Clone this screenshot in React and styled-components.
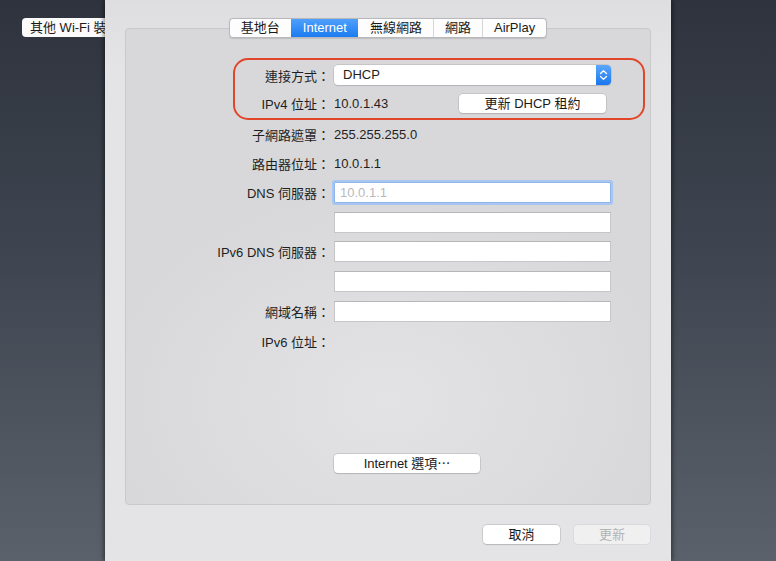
import React from "react";
import styled, { createGlobalStyle, css } from "styled-components";

const Global = createGlobalStyle`
  html, body { margin: 0; padding: 0; }
  body {
    font-family: "Liberation Sans", "Noto Sans CJK TC", sans-serif;
    font-size: 13px;
    color: #1e1e1e;
    -webkit-font-smoothing: antialiased;
  }
`;

const Desktop = styled.div`
  display: grid;
  grid-template-columns: 105px 566px 1fr;
  width: 776px;
  height: 561px;
  overflow: hidden;
  background: linear-gradient(180deg, #2e333d 0%, #3f4550 45%, #5b616a 100%);
`;

const BackColumn = styled.div`
  padding: 18px 0 0 22px;
  overflow: hidden;
`;

const BackButton = styled.div`
  height: 19px;
  width: 110px;
  box-sizing: border-box;
  padding-left: 8px;
  background: #fbfbfb;
  border-radius: 4px;
  white-space: nowrap;
  line-height: 19px;
  font-size: 13px;
  color: #1a1a1a;
`;

const Sheet = styled.div`
  display: flex;
  flex-direction: column;
  padding: 18px 20px 0;
  background: linear-gradient(180deg, #dedee0 0%, #e4e4e6 12%, #e4e4e6 100%);
  box-shadow: -2px 0 4px rgba(0, 0, 0, 0.35), 2px 0 4px rgba(0, 0, 0, 0.35);
  position: relative;
  z-index: 1;
`;

const TabBar = styled.div`
  align-self: center;
  display: flex;
  height: 20px;
  box-sizing: border-box;
  border: 1px solid #b9b9bb;
  border-radius: 4px;
  background: #fdfdfd;
  overflow: hidden;
  position: relative;
  z-index: 2;
  box-shadow: 0 0.5px 1px rgba(0, 0, 0, 0.12);
`;

const Tab = styled.div`
  padding: 0 11px;
  line-height: 18px;
  font-size: 13px;
  color: #1a1a1a;
  border-left: 1px solid #d6d6d6;
  &:first-child { border-left: none; }
  ${(p) =>
    p.$active &&
    css`
      color: #fff;
      border-left-color: transparent;
      background: linear-gradient(180deg, #4ea0fb 0%, #1c7bf2 100%);
      & + div { border-left-color: transparent; }
    `}
`;

const Panel = styled.div`
  position: relative;
  margin-top: -10px;
  height: 477px;
  box-sizing: border-box;
  border: 1px solid #c9c9cb;
  border-radius: 4px;
  background: radial-gradient(ellipse 55% 45% at 50% 78%, #e3e3e5 0%, #d8d8da 100%);
  padding-top: 36px;
  display: flex;
  flex-direction: column;
`;

const Annotation = styled.div`
  position: absolute;
  left: 107px;
  top: 29px;
  width: 412px;
  height: 62px;
  box-sizing: border-box;
  border: 2px solid #e2462a;
  border-radius: 15px;
  pointer-events: none;
`;

const Row = styled.div`
  display: grid;
  grid-template-columns: 204px 277px;
  column-gap: 4px;
  align-items: center;
  height: ${(p) => p.$h || 20}px;
  margin-top: ${(p) => p.$mt || 0}px;
`;

const Label = styled.div`
  text-align: right;
  white-space: nowrap;
  color: #1f1f1f;
`;

const Value = styled.div`
  display: flex;
  align-items: center;
  color: #1f1f1f;
`;

const Popup = styled.div`
  height: 20px;
  box-sizing: border-box;
  display: flex;
  align-items: stretch;
  background: #fff;
  border-radius: 4px;
  box-shadow: 0 0 0 0.5px #b4b4b6, 0 1px 1px rgba(0, 0, 0, 0.15);
  overflow: hidden;
`;

const PopupText = styled.div`
  flex: 1;
  padding-left: 9px;
  line-height: 20px;
`;

const Stepper = styled.div`
  width: 15px;
  display: flex;
  align-items: center;
  justify-content: center;
  background: linear-gradient(180deg, #5aa7fb 0%, #1a76ef 100%);
`;

const PushButton = styled.div`
  width: ${(p) => p.$w}px;
  height: 19px;
  box-sizing: border-box;
  margin-left: ${(p) => (p.$auto ? "auto" : "0")};
  margin-right: ${(p) => p.$mr || 0}px;
  border-radius: 4px;
  text-align: center;
  line-height: 19px;
  font-size: 13px;
  background: ${(p) => (p.$disabled ? "#f0f0f1" : "#fff")};
  color: ${(p) => (p.$disabled ? "#b3b3b3" : "#1a1a1a")};
  box-shadow: ${(p) =>
    p.$disabled
      ? "0 0 0 0.5px #cfcfd1"
      : "0 0 0 0.5px #b2b2b4, 0 1px 1px rgba(0,0,0,0.16)"};
`;

const Field = styled.div`
  height: 21px;
  box-sizing: border-box;
  background: #fff;
  border: 1px solid #c6c6c8;
  border-top-color: #b7b7b9;
  padding-left: 5px;
  line-height: 19px;
  color: #b9b9bb;
  ${(p) =>
    p.$focused &&
    css`
      border-color: #8fb4ea;
      box-shadow: 0 0 0 2px #a9c6f0;
      border-radius: 1px;
    `}
`;

const Footer = styled.div`
  display: flex;
  justify-content: flex-end;
  gap: 14px;
  margin-top: 20px;
  padding-right: 1px;
`;

const ButtonRow = styled.div`
  margin-top: 103px;
  padding-left: 208px;
`;

function StepperIcon() {
  return (
    <svg width="9" height="12" viewBox="0 0 9 12">
      <path d="M1.5 4.5 L4.5 1.8 L7.5 4.5" fill="none" stroke="#fff" strokeWidth="1.3" strokeLinecap="round" strokeLinejoin="round" />
      <path d="M1.5 7.5 L4.5 10.2 L7.5 7.5" fill="none" stroke="#fff" strokeWidth="1.3" strokeLinecap="round" strokeLinejoin="round" />
    </svg>
  );
}

const tabs = ["基地台", "Internet", "無線網路", "網路", "AirPlay"];

export default function App() {
  return (
    <>
      <Global />
      <Desktop>
        <BackColumn>
          <BackButton>其他 Wi-Fi 裝置</BackButton>
        </BackColumn>
        <Sheet>
          <TabBar>
            {tabs.map((t) => (
              <Tab key={t} $active={t === "Internet"}>{t}</Tab>
            ))}
          </TabBar>
          <Panel>
            <Annotation />
            <Row $h={20}>
              <Label>連接方式：</Label>
              <Popup>
                <PopupText>DHCP</PopupText>
                <Stepper><StepperIcon /></Stepper>
              </Popup>
            </Row>
            <Row $h={19} $mt={9}>
              <Label>IPv4 位址：</Label>
              <Value>
                10.0.1.43
                <PushButton $w={147} $auto $mr={5}>更新 DHCP 租約</PushButton>
              </Value>
            </Row>
            <Row $h={20} $mt={11}>
              <Label>子網路遮罩：</Label>
              <Value>255.255.255.0</Value>
            </Row>
            <Row $h={20} $mt={9}>
              <Label>路由器位址：</Label>
              <Value>10.0.1.1</Value>
            </Row>
            <Row $h={21} $mt={9}>
              <Label>DNS 伺服器：</Label>
              <Field $focused>10.0.1.1</Field>
            </Row>
            <Row $h={21} $mt={9}>
              <Label />
              <Field />
            </Row>
            <Row $h={21} $mt={8}>
              <Label>IPv6 DNS 伺服器：</Label>
              <Field />
            </Row>
            <Row $h={21} $mt={9}>
              <Label />
              <Field />
            </Row>
            <Row $h={21} $mt={9}>
              <Label>網域名稱：</Label>
              <Field />
            </Row>
            <Row $h={20} $mt={9}>
              <Label>IPv6 位址：</Label>
              <Value />
            </Row>
            <ButtonRow>
              <PushButton $w={146}>Internet 選項⋯</PushButton>
            </ButtonRow>
          </Panel>
          <Footer>
            <PushButton $w={77}>取消</PushButton>
            <PushButton $w={76} $disabled>更新</PushButton>
          </Footer>
        </Sheet>
        <div />
      </Desktop>
    </>
  );
}
